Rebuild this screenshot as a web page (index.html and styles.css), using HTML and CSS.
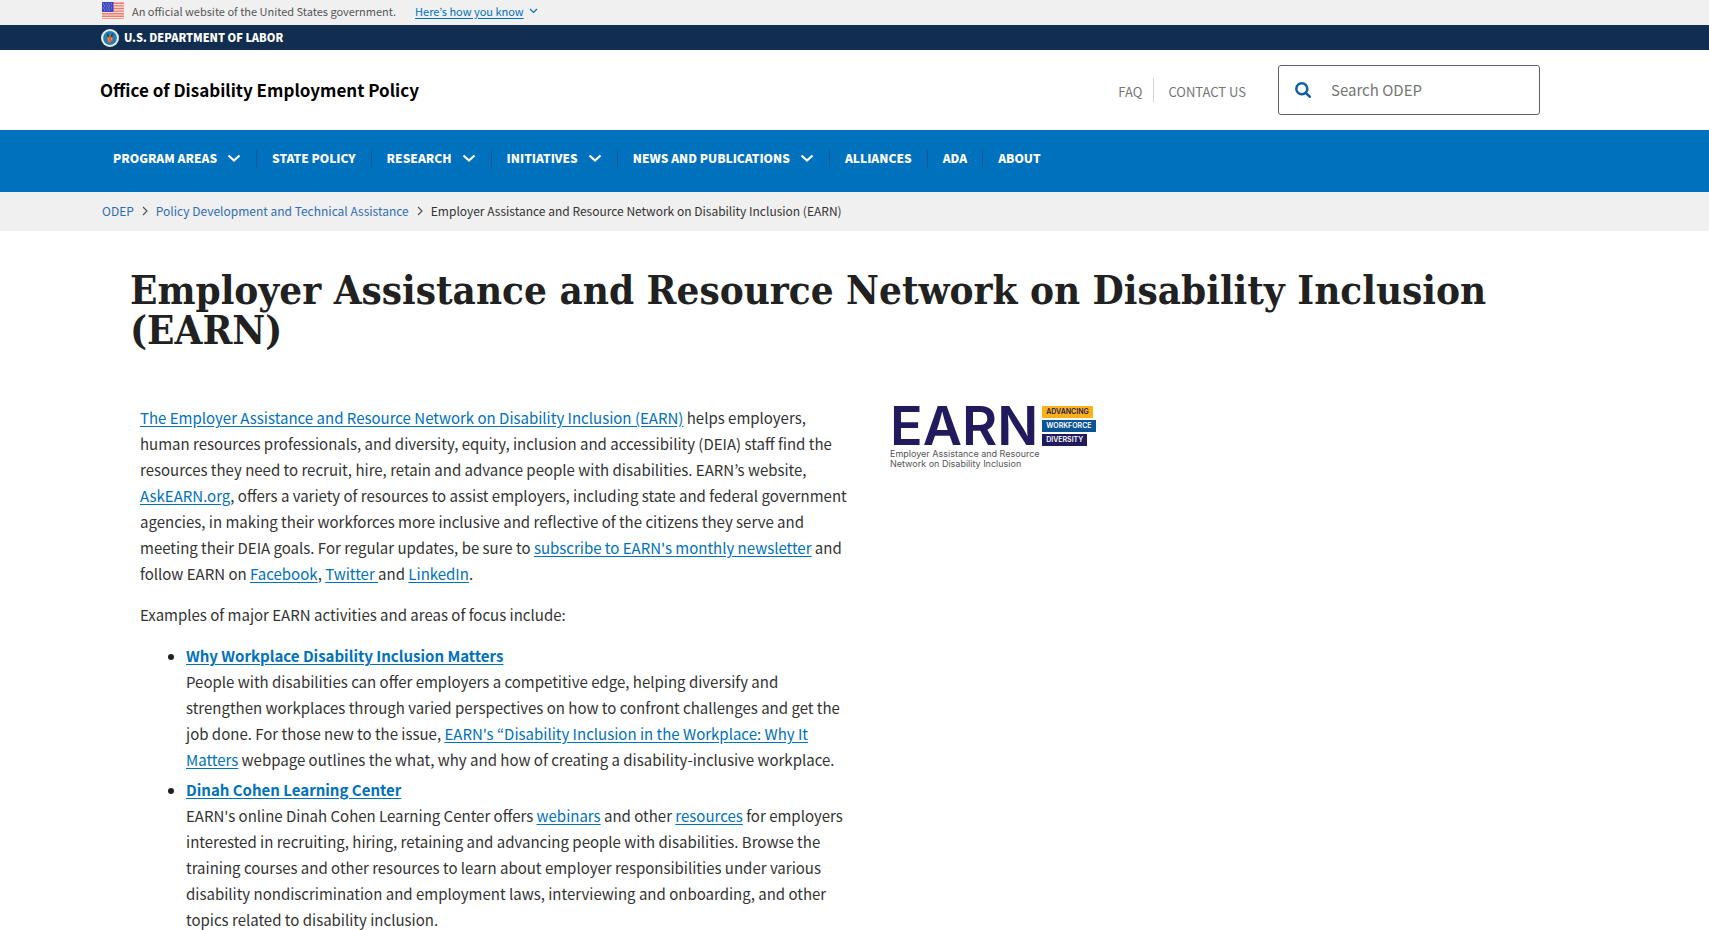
FILE: index.html
```html
<!DOCTYPE html>
<html lang="en">
<head>
<meta charset="utf-8">
<title>Employer Assistance and Resource Network on Disability Inclusion (EARN) | U.S. Department of Labor</title>
<link rel="stylesheet" href="styles.css">
</head>
<body>
<svg class="defs" aria-hidden="true">
  <symbol id="caret" viewBox="0 0 14 8"><path d="M1.500 1.500 7 6.500l5.500-5" fill="none" stroke="currentColor" stroke-width="2.200"/></symbol>
  <symbol id="caret-thin" viewBox="0 0 9 6"><path d="M1 1l3.500 3.500L8 1" fill="none" stroke="currentColor" stroke-width="1.200"/></symbol>
  <symbol id="chevron" viewBox="0 0 6 10"><path d="M1 1l4 4-4 4" fill="none" stroke="currentColor" stroke-width="1.200"/></symbol>
</svg>

<div class="gov-banner">
  <svg class="flag" viewBox="0 0 22 17" aria-hidden="true">
    <rect width="22" height="17" fill="#fbe3de"/>
    <path d="M0 1.300h22M0 3.900h22M0 6.500h22M0 9.100h22M0 11.700h22M0 14.300h22" stroke="#ee7b6c" stroke-width="1.400"/>
    <path d="M0 16.500h22" stroke="#ee9d91" stroke-width="1"/>
    <rect width="11.500" height="10" fill="#3b45c0"/>
    <path d="M1 2h10M2 4h8M1 6h10M2 8h8" stroke="#a3a9e6" stroke-width="1" stroke-dasharray="1 1.600"/>
  </svg>
  <span class="gov-text">An official website of the United States government.</span>
  <button class="gov-toggle" type="button"><span class="gov-link">Here’s how you know</span><svg class="gov-caret" aria-hidden="true"><use href="#caret-thin"/></svg></button>
</div>

<div class="dol-bar">
  <svg class="seal" viewBox="0 0 18 18" aria-hidden="true">
    <circle cx="9" cy="9" r="9" fill="#eef1ee"/>
    <circle cx="9" cy="9" r="8.300" fill="none" stroke="#9fb7c4" stroke-width=".5" stroke-dasharray="1 .7"/>
    <circle cx="9" cy="9" r="6.900" fill="#1b7fc0"/>
    <path d="M5.800 3.600 8.200 6.300h1.600l2.400-2.700-.7 4.200h-5z" fill="#3d3b33"/>
    <path d="M6.200 8h5.600v3.500L9 14.600l-2.800-3.100z" fill="#d8642e"/>
    <path d="M7 10h1M10 10h1M7.500 12h1" stroke="#f0c9a0" stroke-width=".9"/>
    <path d="M9 5.500v2.500" stroke="#d9853a" stroke-width="1.200"/>
  </svg>
  <a class="dol-link" href="#">U.S. DEPARTMENT OF LABOR</a>
</div>

<header class="site-header">
  <a class="agency" href="#">Office of Disability Employment Policy</a>
  <div class="utility">
    <a class="utility-link" href="#">FAQ</a>
    <a class="utility-link" href="#">CONTACT US</a>
  </div>
  <form class="search">
    <button class="search-btn" type="submit" aria-label="Search">
      <svg class="search-icon" viewBox="0 0 16 16" aria-hidden="true"><circle cx="6.800" cy="6.800" r="5.500" fill="none" stroke="#0a5fa8" stroke-width="2.500"/><path d="M10.800 10.800l3.900 3.900" stroke="#0a5fa8" stroke-width="2.600" stroke-linecap="round"/></svg>
    </button>
    <input class="search-input" type="text" placeholder="Search ODEP" aria-label="Search ODEP">
  </form>
</header>

<nav class="main-nav" aria-label="Main">
  <ul class="nav-list">
    <li class="nav-item"><button class="nav-link" type="button">PROGRAM AREAS<svg class="caret" aria-hidden="true"><use href="#caret"/></svg></button></li>
    <li class="nav-item"><a class="nav-link" href="#">STATE POLICY</a></li>
    <li class="nav-item"><button class="nav-link" type="button">RESEARCH<svg class="caret" aria-hidden="true"><use href="#caret"/></svg></button></li>
    <li class="nav-item"><button class="nav-link" type="button">INITIATIVES<svg class="caret" aria-hidden="true"><use href="#caret"/></svg></button></li>
    <li class="nav-item"><button class="nav-link" type="button">NEWS AND PUBLICATIONS<svg class="caret" aria-hidden="true"><use href="#caret"/></svg></button></li>
    <li class="nav-item"><a class="nav-link" href="#">ALLIANCES</a></li>
    <li class="nav-item"><a class="nav-link" href="#">ADA</a></li>
    <li class="nav-item"><a class="nav-link" href="#">ABOUT</a></li>
  </ul>
</nav>

<nav class="crumbs" aria-label="Breadcrumb">
  <a class="crumb" href="#">ODEP</a>
  <svg class="chevron" aria-hidden="true"><use href="#chevron"/></svg>
  <a class="crumb" href="#">Policy Development and Technical Assistance</a>
  <svg class="chevron" aria-hidden="true"><use href="#chevron"/></svg>
  <span class="crumb-current">Employer Assistance and Resource Network on Disability Inclusion (EARN)</span>
</nav>

<main class="page">
  <h1 class="title">Employer Assistance and Resource Network on Disability Inclusion (EARN)</h1>
  <div class="columns">
    <div class="copy">
      <p class="para"><a href="#">The Employer Assistance and Resource Network on Disability Inclusion (EARN)</a> helps employers, human resources professionals, and diversity, equity, inclusion and accessibility (DEIA) staff find the resources they need to recruit, hire, retain and advance people with disabilities. EARN’s website, <a href="#">AskEARN.org</a>, offers a variety of resources to assist employers, including state and federal government agencies, in making their workforces more inclusive and reflective of the citizens they serve and meeting their DEIA goals. For regular updates, be sure to <a href="#">subscribe to EARN's monthly newsletter</a> and follow EARN on <a href="#">Facebook</a>, <a href="#">Twitter </a>and <a href="#">LinkedIn</a>.</p>
      <p class="para">Examples of major EARN activities and areas of focus include:</p>
      <ul class="topics">
        <li class="topic"><a class="topic-title" href="#">Why Workplace Disability Inclusion Matters</a><br>People with disabilities can offer employers a competitive edge, helping diversify and strengthen workplaces through varied perspectives on how to confront challenges and get the job done. For those new to the issue, <a href="#">EARN's “Disability Inclusion in the Workplace: Why It Matters</a> webpage outlines the what, why and how of creating a disability-inclusive workplace.</li>
        <li class="topic"><a class="topic-title" href="#">Dinah Cohen Learning Center</a><br>EARN's online Dinah Cohen Learning Center offers <a href="#">webinars</a> and other <a href="#">resources</a> for employers interested in recruiting, hiring, retaining and advancing people with disabilities. Browse the training courses and other resources to learn about employer responsibilities under various disability nondiscrimination and employment laws, interviewing and onboarding, and other topics related to disability inclusion.</li>
      </ul>
    </div>
    <aside class="logo">
      <div class="logo-top">
        <span class="logo-word">EARN</span>
        <div class="tags">
          <span class="tag tag-gold">ADVANCING</span>
          <span class="tag tag-blue">WORKFORCE</span>
          <span class="tag tag-navy">DIVERSITY</span>
        </div>
      </div>
      <p class="logo-sub">Employer Assistance and Resource<br>Network on Disability Inclusion</p>
    </aside>
  </div>
</main>
</body>
</html>
```

FILE: styles.css
```css
* { box-sizing: border-box; }

body {
  margin: 0;
  background: #fff;
  color: #333;
  font-family: "Noto Sans CJK KR", "Open Sans", sans-serif;
  font-size: 15px;
}

button { border: 0; padding: 0; background: none; font: inherit; color: inherit; cursor: pointer; }
ul, p, h1 { margin: 0; padding: 0; }
.defs { display: none; }

.gov-banner {
  display: flex;
  align-items: center;
  height: 25px;
  padding: 0 102px 4px;
  background: #f0f0f0;
  font-size: 11px;
  line-height: 16px;
  color: #555;
}
.flag { width: 22px; height: 17px; margin-right: 8px; }
.gov-toggle { display: flex; align-items: center; margin-left: 19px; color: #0071bc; }
.gov-link { text-decoration: underline; text-underline-offset: 2px; }
.gov-caret { width: 9px; height: 6px; margin-left: 5px; }

.dol-bar {
  display: flex;
  align-items: center;
  height: 25px;
  padding: 0 101px;
  background: #112e51;
}
.seal { width: 18px; height: 18px; margin-right: 5px; }
.dol-link { padding-bottom: 2px; color: #fff; font-size: 11px; font-weight: 900; line-height: 18px; text-decoration: none; }

.site-header {
  display: flex;
  align-items: center;
  height: 80px;
  padding: 0 169px 0 100px;
}
.agency { margin-right: auto; padding-bottom: 2px; color: #000; font-size: 17px; font-weight: 700; text-decoration: none; }
.utility { display: flex; margin-right: 32px; }
.utility-link { padding: 3px 14px 0; color: #757575; font-size: 13px; line-height: 21px; text-decoration: none; }
.utility-link:first-child { padding-right: 11px; }
.utility-link + .utility-link { border-left: 1px solid #d6d7d9; padding-right: 0; }
.search {
  display: flex;
  align-items: center;
  width: 262px;
  height: 50px;
  border: 1px solid #5b616b;
  border-radius: 3px;
}
.search-btn { display: flex; margin-left: 16px; }
.search-icon { width: 16px; height: 16px; }
.search-input {
  flex: 1;
  min-width: 0;
  margin-left: 20px;
  padding: 0;
  border: 0;
  background: none;
  font: inherit;
  line-height: 24px;
}
.search-input::placeholder { color: #757575; }

.main-nav { height: 62px; padding: 20px 98px; background: #0071bc; }
.nav-list { display: flex; list-style: none; }
.nav-item + .nav-item { border-left: 1px solid #205493; }
.nav-link {
  display: flex;
  align-items: center;
  height: 17px;
  padding: 0 15px 1px;
  color: #fff;
  font-size: 12px;
  font-weight: 900;
  line-height: 16px;
  text-decoration: none;
}
.caret { width: 14px; height: 8px; margin-left: 10px; }

.crumbs {
  display: flex;
  align-items: center;
  gap: 8px;
  height: 39px;
  padding: 0 102px 2px;
  background: #f0f0f0;
  font-size: 12px;
}
.crumb { color: #2f6db5; text-decoration: none; }
.crumb-current { color: #333; }
.chevron { width: 6px; height: 10px; color: #555; }

.page { padding: 39px 200px 0 130px; }
.title {
  color: #212121;
  font-family: "DejaVu Serif Condensed", "DejaVu Serif", serif;
  font-size: 40px;
  font-weight: 700;
  line-height: 40px;
}
.columns {
  display: grid;
  grid-template-columns: 710px 1fr;
  gap: 40px;
  margin-top: 55px;
  padding-left: 10px;
}
.copy { line-height: 26px; }
.para { margin-bottom: 15px; }
.columns a { color: #0071bc; text-underline-offset: 2px; }
.topics { padding-left: 46px; }
.topic { margin-bottom: 4px; }
.topic::marker { color: #212121; }
.columns .topic-title { font-weight: 700; }

.logo { padding-top: 1px; }
.logo-top { display: flex; gap: 4px; }
.logo-word { color: #211a5c; font-family: Inter, sans-serif; font-size: 54px; font-weight: 600; line-height: 40px; }
.tags { display: flex; flex-direction: column; align-items: flex-start; gap: 2px; }
.tag { padding: 0 4px; color: #fff; font-family: Inter, sans-serif; font-size: 7px; font-weight: 600; line-height: 12px; }
.tag-gold { background: #fbb117; color: #211a5c; }
.tag-blue { background: #0b5394; }
.tag-navy { background: #211a5c; }
.logo-sub { margin-top: 3px; color: #555; font-family: Inter, sans-serif; font-size: 9px; font-weight: 400; line-height: 10px; }
```
